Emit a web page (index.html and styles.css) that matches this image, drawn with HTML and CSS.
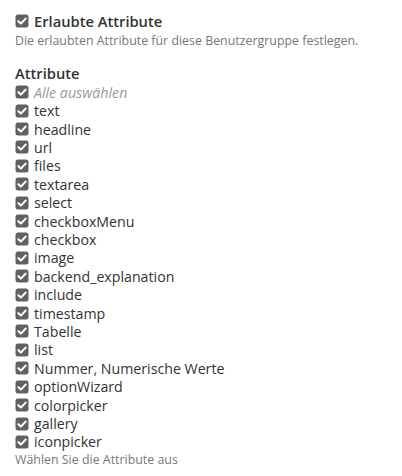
FILE: index.html
```html
<!DOCTYPE html>
<html>
<head>
<meta charset="utf-8">
<link rel="stylesheet" href="styles.css">
</head>
<body>
<div class="panel">
  <label class="title-row">
    <span class="cb"><svg viewBox="0 0 14 14" width="14" height="14"><rect x="0.5" y="0.5" width="13" height="13" rx="2.5" fill="#616161"/><path d="M3.4 7.2 L5.9 9.6 L10.6 4.6" stroke="#fff" stroke-width="2.1" fill="none" stroke-linecap="round" stroke-linejoin="round"/></svg></span>
    <span class="title">Erlaubte Attribute</span>
  </label>
  <div class="desc">Die erlaubten Attribute für diese Benutzergruppe festlegen.</div>

  <div class="heading">Attribute</div>
  <ul class="list">
    <li class="all"><span class="cb"><svg viewBox="0 0 14 14" width="14" height="14"><rect x="0.5" y="0.5" width="13" height="13" rx="2.5" fill="#616161"/><path d="M3.4 7.2 L5.9 9.6 L10.6 4.6" stroke="#fff" stroke-width="2.1" fill="none" stroke-linecap="round" stroke-linejoin="round"/></svg></span><span>Alle auswählen</span></li>
    <li><span class="cb"><svg viewBox="0 0 14 14" width="14" height="14"><rect x="0.5" y="0.5" width="13" height="13" rx="2.5" fill="#616161"/><path d="M3.4 7.2 L5.9 9.6 L10.6 4.6" stroke="#fff" stroke-width="2.1" fill="none" stroke-linecap="round" stroke-linejoin="round"/></svg></span><span>text</span></li>
    <li><span class="cb"><svg viewBox="0 0 14 14" width="14" height="14"><rect x="0.5" y="0.5" width="13" height="13" rx="2.5" fill="#616161"/><path d="M3.4 7.2 L5.9 9.6 L10.6 4.6" stroke="#fff" stroke-width="2.1" fill="none" stroke-linecap="round" stroke-linejoin="round"/></svg></span><span>headline</span></li>
    <li><span class="cb"><svg viewBox="0 0 14 14" width="14" height="14"><rect x="0.5" y="0.5" width="13" height="13" rx="2.5" fill="#616161"/><path d="M3.4 7.2 L5.9 9.6 L10.6 4.6" stroke="#fff" stroke-width="2.1" fill="none" stroke-linecap="round" stroke-linejoin="round"/></svg></span><span>url</span></li>
    <li><span class="cb"><svg viewBox="0 0 14 14" width="14" height="14"><rect x="0.5" y="0.5" width="13" height="13" rx="2.5" fill="#616161"/><path d="M3.4 7.2 L5.9 9.6 L10.6 4.6" stroke="#fff" stroke-width="2.1" fill="none" stroke-linecap="round" stroke-linejoin="round"/></svg></span><span>files</span></li>
    <li><span class="cb"><svg viewBox="0 0 14 14" width="14" height="14"><rect x="0.5" y="0.5" width="13" height="13" rx="2.5" fill="#616161"/><path d="M3.4 7.2 L5.9 9.6 L10.6 4.6" stroke="#fff" stroke-width="2.1" fill="none" stroke-linecap="round" stroke-linejoin="round"/></svg></span><span>textarea</span></li>
    <li><span class="cb"><svg viewBox="0 0 14 14" width="14" height="14"><rect x="0.5" y="0.5" width="13" height="13" rx="2.5" fill="#616161"/><path d="M3.4 7.2 L5.9 9.6 L10.6 4.6" stroke="#fff" stroke-width="2.1" fill="none" stroke-linecap="round" stroke-linejoin="round"/></svg></span><span>select</span></li>
    <li><span class="cb"><svg viewBox="0 0 14 14" width="14" height="14"><rect x="0.5" y="0.5" width="13" height="13" rx="2.5" fill="#616161"/><path d="M3.4 7.2 L5.9 9.6 L10.6 4.6" stroke="#fff" stroke-width="2.1" fill="none" stroke-linecap="round" stroke-linejoin="round"/></svg></span><span>checkboxMenu</span></li>
    <li><span class="cb"><svg viewBox="0 0 14 14" width="14" height="14"><rect x="0.5" y="0.5" width="13" height="13" rx="2.5" fill="#616161"/><path d="M3.4 7.2 L5.9 9.6 L10.6 4.6" stroke="#fff" stroke-width="2.1" fill="none" stroke-linecap="round" stroke-linejoin="round"/></svg></span><span>checkbox</span></li>
    <li><span class="cb"><svg viewBox="0 0 14 14" width="14" height="14"><rect x="0.5" y="0.5" width="13" height="13" rx="2.5" fill="#616161"/><path d="M3.4 7.2 L5.9 9.6 L10.6 4.6" stroke="#fff" stroke-width="2.1" fill="none" stroke-linecap="round" stroke-linejoin="round"/></svg></span><span>image</span></li>
    <li><span class="cb"><svg viewBox="0 0 14 14" width="14" height="14"><rect x="0.5" y="0.5" width="13" height="13" rx="2.5" fill="#616161"/><path d="M3.4 7.2 L5.9 9.6 L10.6 4.6" stroke="#fff" stroke-width="2.1" fill="none" stroke-linecap="round" stroke-linejoin="round"/></svg></span><span>backend_explanation</span></li>
    <li><span class="cb"><svg viewBox="0 0 14 14" width="14" height="14"><rect x="0.5" y="0.5" width="13" height="13" rx="2.5" fill="#616161"/><path d="M3.4 7.2 L5.9 9.6 L10.6 4.6" stroke="#fff" stroke-width="2.1" fill="none" stroke-linecap="round" stroke-linejoin="round"/></svg></span><span>include</span></li>
    <li><span class="cb"><svg viewBox="0 0 14 14" width="14" height="14"><rect x="0.5" y="0.5" width="13" height="13" rx="2.5" fill="#616161"/><path d="M3.4 7.2 L5.9 9.6 L10.6 4.6" stroke="#fff" stroke-width="2.1" fill="none" stroke-linecap="round" stroke-linejoin="round"/></svg></span><span>timestamp</span></li>
    <li><span class="cb"><svg viewBox="0 0 14 14" width="14" height="14"><rect x="0.5" y="0.5" width="13" height="13" rx="2.5" fill="#616161"/><path d="M3.4 7.2 L5.9 9.6 L10.6 4.6" stroke="#fff" stroke-width="2.1" fill="none" stroke-linecap="round" stroke-linejoin="round"/></svg></span><span>Tabelle</span></li>
    <li><span class="cb"><svg viewBox="0 0 14 14" width="14" height="14"><rect x="0.5" y="0.5" width="13" height="13" rx="2.5" fill="#616161"/><path d="M3.4 7.2 L5.9 9.6 L10.6 4.6" stroke="#fff" stroke-width="2.1" fill="none" stroke-linecap="round" stroke-linejoin="round"/></svg></span><span>list</span></li>
    <li><span class="cb"><svg viewBox="0 0 14 14" width="14" height="14"><rect x="0.5" y="0.5" width="13" height="13" rx="2.5" fill="#616161"/><path d="M3.4 7.2 L5.9 9.6 L10.6 4.6" stroke="#fff" stroke-width="2.1" fill="none" stroke-linecap="round" stroke-linejoin="round"/></svg></span><span>Nummer, Numerische Werte</span></li>
    <li><span class="cb"><svg viewBox="0 0 14 14" width="14" height="14"><rect x="0.5" y="0.5" width="13" height="13" rx="2.5" fill="#616161"/><path d="M3.4 7.2 L5.9 9.6 L10.6 4.6" stroke="#fff" stroke-width="2.1" fill="none" stroke-linecap="round" stroke-linejoin="round"/></svg></span><span>optionWizard</span></li>
    <li><span class="cb"><svg viewBox="0 0 14 14" width="14" height="14"><rect x="0.5" y="0.5" width="13" height="13" rx="2.5" fill="#616161"/><path d="M3.4 7.2 L5.9 9.6 L10.6 4.6" stroke="#fff" stroke-width="2.1" fill="none" stroke-linecap="round" stroke-linejoin="round"/></svg></span><span>colorpicker</span></li>
    <li><span class="cb"><svg viewBox="0 0 14 14" width="14" height="14"><rect x="0.5" y="0.5" width="13" height="13" rx="2.5" fill="#616161"/><path d="M3.4 7.2 L5.9 9.6 L10.6 4.6" stroke="#fff" stroke-width="2.1" fill="none" stroke-linecap="round" stroke-linejoin="round"/></svg></span><span>gallery</span></li>
    <li><span class="cb"><svg viewBox="0 0 14 14" width="14" height="14"><rect x="0.5" y="0.5" width="13" height="13" rx="2.5" fill="#616161"/><path d="M3.4 7.2 L5.9 9.6 L10.6 4.6" stroke="#fff" stroke-width="2.1" fill="none" stroke-linecap="round" stroke-linejoin="round"/></svg></span><span>iconpicker</span></li>
  </ul>
  <div class="hint">Wählen Sie die Attribute aus</div>
</div>
</body>
</html>
```

FILE: styles.css
```css
html, body {
  margin: 0;
  padding: 0;
  background: #fff;
}
body {
  font-family: "Open Sans", "Noto Sans", sans-serif;
  color: #333;
}
.panel {
  padding: 11px 15px 0 15px;
}
.title-row {
  display: flex;
  align-items: center;
  gap: 5px;
  height: 20px;
}
.cb {
  display: flex;
  width: 14px;
  height: 14px;
  flex: none;
}
.title {
  font-size: 14.7px;
  font-weight: 600;
  color: #333;
}
.desc {
  font-size: 12.4px;
  color: #777;
  line-height: 18px;
  margin-top: 1px;
}
.heading {
  font-size: 14.7px;
  font-weight: 600;
  color: #333;
  margin-top: 14px;
  line-height: 18px;
}
.list {
  list-style: none;
  margin: 1px 0 0 0;
  padding: 0;
}
.list li {
  display: flex;
  align-items: center;
  gap: 5px;
  height: 18.42px;
  font-size: 14.2px;
  color: #333;
}
.list li.all span:last-child {
  font-style: italic;
  color: #999;
}
.hint {
  font-size: 12.4px;
  color: #777;
  line-height: 18px;
}
```
